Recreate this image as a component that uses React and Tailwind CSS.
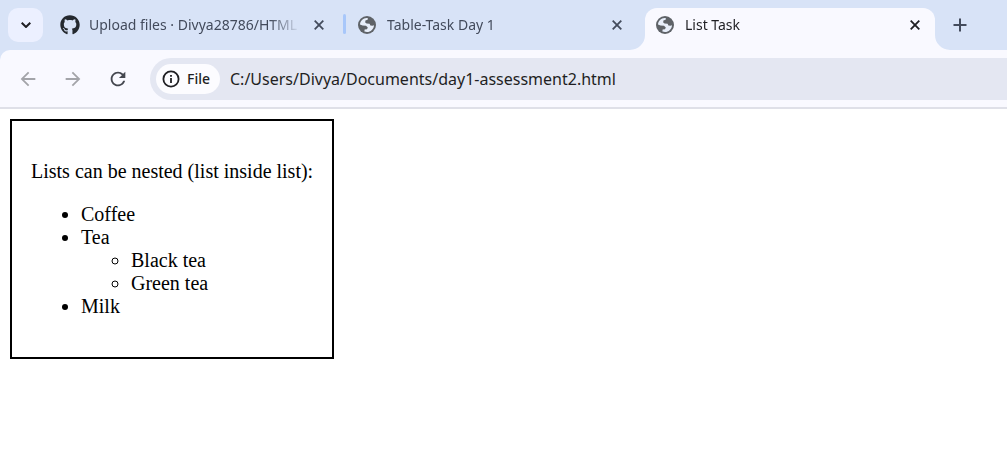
import { FaGithub } from "react-icons/fa";
import { MdArrowBack, MdArrowForward, MdRefresh } from "react-icons/md";

const uiFont = "font-['Noto_Sans','Open_Sans',sans-serif]";

function Globe() {
  return (
    <svg viewBox="0 0 18 18" className="size-[18px] shrink-0" aria-hidden="true">
      <circle cx="9" cy="9" r="9" fill="#5f6368" />
      <path
        d="M2 8.6C2.2 5 5 2.2 8.6 2L10 2.2L9.6 3.8L7.4 4.6L7.2 6.4L8.6 7.6L11.6 7.8L12.4 9.6L14.4 9.8L16 9.2C15.8 13 12.8 16 9 16L6.4 15.5L6.6 13.6L9 13.2L9.8 11.4L8 9.8L4.6 9.6Z"
        fill="#e8effb"
      />
    </svg>
  );
}

function Cross() {
  return (
    <svg viewBox="0 0 10 10" className="size-[10px]" fill="none" stroke="currentColor" strokeWidth="1.8" aria-hidden="true">
      <path d="M0.7 0.7L9.3 9.3M9.3 0.7L0.7 9.3" />
    </svg>
  );
}

function Flare({ side }) {
  return (
    <svg
      viewBox="0 0 15 15"
      className={side === "left" ? "absolute right-full bottom-0 size-[15px]" : "absolute left-full bottom-0 size-[15px]"}
      aria-hidden="true"
    >
      <path d={side === "left" ? "M15 0V15H0A15 15 0 0 0 15 0Z" : "M0 0V15H15A15 15 0 0 1 0 0Z"} fill="#f9f9ff" />
    </svg>
  );
}

function Tab({ icon, title, active }) {
  return (
    <div
      className={
        active
          ? "relative flex h-[42px] w-[290px] items-center rounded-t-xl bg-[#f9f9ff] pb-2 pl-[11px] pr-[9px] text-[#1f1f23]"
          : "relative flex h-[42px] w-[290px] items-center pb-2 pl-[11px] pr-[9px] text-[#434b5c]"
      }
    >
      {active && <Flare side="left" />}
      {active && <Flare side="right" />}
      <span className="flex w-[29px] shrink-0">{icon}</span>
      <a
        href="#"
        className="mr-2 min-w-0 flex-1 overflow-hidden text-sm leading-5 whitespace-nowrap [mask-image:linear-gradient(to_right,black_calc(100%_-_30px),transparent)]"
      >
        {title}
      </a>
      <button type="button" aria-label={`Close ${title}`} className="flex size-[22px] shrink-0 items-center justify-center">
        <Cross />
      </button>
    </div>
  );
}

export default function App() {
  return (
    <div className="min-h-screen bg-white">
      <header className={`bg-[#d8e3f7] ${uiFont}`}>
        <nav className="flex h-[50px] items-start overflow-hidden pt-2 pl-2">
          <button
            type="button"
            aria-label="Search tabs"
            className="mr-[6px] flex h-[34px] w-[35px] shrink-0 items-center justify-center rounded-[10px] bg-[#ecf0ff] text-[#1f1f23]"
          >
            <svg viewBox="0 0 10 6" className="h-[6px] w-[10px]" fill="none" stroke="currentColor" strokeWidth="2" aria-hidden="true">
              <path d="M0.7 0.7L5 5L9.3 0.7" />
            </svg>
          </button>
          <Tab icon={<FaGithub className="size-5 text-[#24292f]" />} title="Upload files · Divya28786/HTML" />
          <div className="mt-[6px] mr-[1px] ml-1 h-5 w-[3px] shrink-0 rounded-full bg-[#a8c7fa]" />
          <Tab icon={<Globe />} title="Table-Task Day 1" />
          <div className="w-2 shrink-0" />
          <Tab icon={<Globe />} title="List Task" active />
          <button type="button" aria-label="New tab" className="ml-2 flex size-[34px] items-center justify-center text-[#434b5c]">
            <svg viewBox="0 0 14 14" className="size-[14px]" fill="none" stroke="currentColor" strokeWidth="2" aria-hidden="true">
              <path d="M7 0.5V13.5M0.5 7H13.5" />
            </svg>
          </button>
        </nav>
        <div className="flex items-center rounded-tl-[10px] border-b-2 border-[#dfe0e8] bg-[#f9f9ff] pt-2 pb-[7px] pl-[17px]">
          <button type="button" aria-label="Back" className="mr-[23px] text-[#a3a4a9]">
            <MdArrowBack className="size-[22px]" />
          </button>
          <button type="button" aria-label="Forward" className="mr-[23px] text-[#a3a4a9]">
            <MdArrowForward className="size-[22px]" />
          </button>
          <button type="button" aria-label="Reload" className="mr-[21px] text-[#44474f]">
            <MdRefresh className="size-[22px]" />
          </button>
          <div className="flex h-[42px] flex-1 items-center rounded-l-full bg-[#e4e7f2] pl-[6px]">
            <button type="button" className="flex h-[30px] items-center gap-[7px] rounded-full bg-[#fcfcff] pr-[10px] pl-[6px] text-sm font-medium text-[#1f1f23]">
              <svg viewBox="0 0 18 18" className="size-[18px]" fill="none" stroke="currentColor" strokeWidth="1.8" aria-hidden="true">
                <circle cx="9" cy="9" r="7.6" />
                <path d="M9 8V13M9 5V6.8" />
              </svg>
              File
            </button>
            <input
              type="text"
              aria-label="Address"
              defaultValue="C:/Users/Divya/Documents/day1-assessment2.html"
              className="ml-[10px] min-w-0 flex-1 bg-transparent text-base leading-6 text-[#1f1f23] outline-none"
            />
          </div>
        </div>
      </header>
      <main className="p-[10px] font-['Liberation_Serif',serif] text-xl leading-[23px] text-black">
        <section className="w-fit border-2 border-black px-[19px] py-[39px]">
          <p className="mb-5">Lists can be nested (list inside list):</p>
          <ul className="list-disc pl-[50px]">
            <li>Coffee</li>
            <li>
              Tea
              <ul className="list-[circle] pl-[50px]">
                <li>Black tea</li>
                <li>Green tea</li>
              </ul>
            </li>
            <li>Milk</li>
          </ul>
        </section>
      </main>
    </div>
  );
}
